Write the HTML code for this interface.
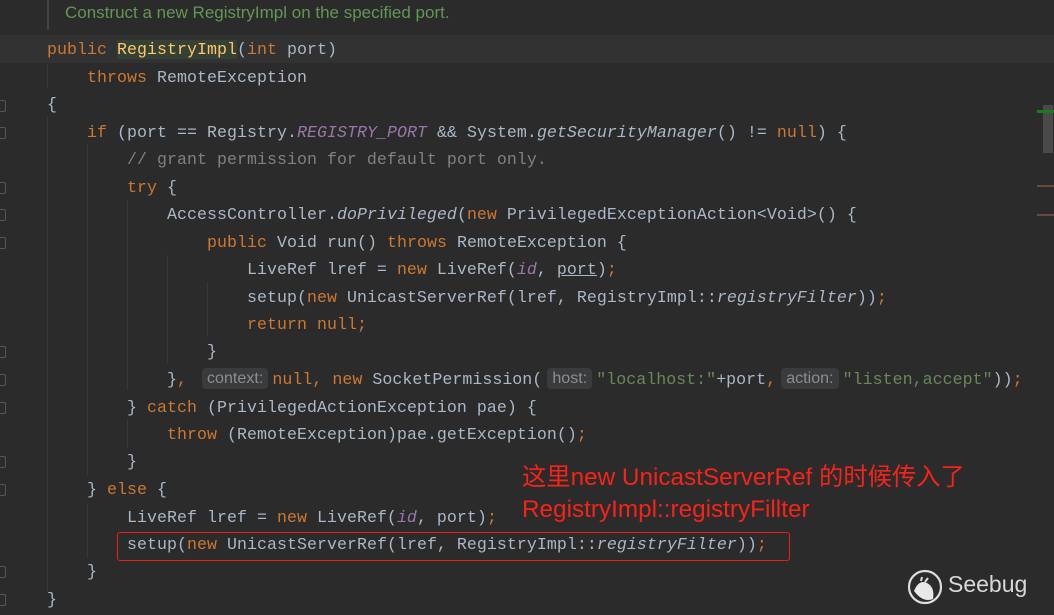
<!DOCTYPE html>
<html><head><meta charset="utf-8"><style>
body{margin:0;width:1054px;height:615px;background:#2b2b2b;overflow:hidden;position:relative;font-family:"Liberation Mono",monospace;}
.l{position:absolute;left:47px;height:27.5px;line-height:27.5px;font-size:16.6px;color:#a9b7c6;white-space:pre;letter-spacing:0.04px}
.k{color:#cc7832}.p{color:#9876aa;font-style:italic}.s{color:#6a8759}.c{color:#808080}.i{font-style:italic}
.h{display:inline-block;background:#3a3b3c;color:#8b8e90;font-family:"Liberation Sans",sans-serif;font-size:16px;line-height:21px;padding:0 5px;border-radius:4px;margin:0 4px 0 5px;vertical-align:1px}
.g{position:absolute;width:1px;background:#393939}
.f{position:absolute;left:0;width:5px;height:10px;border:1px solid #555;border-left:none;border-radius:0 2px 2px 0}
</style></head><body>
<div style="position:absolute;left:47px;top:0;width:2px;height:30px;background:#3c4a3c"></div>
<div style="position:absolute;left:65px;top:3px;font-family:'Liberation Sans',sans-serif;font-size:17px;color:#629755">Construct a new RegistryImpl on the specified port.</div>
<div style="position:absolute;left:0;top:35px;width:1054px;height:28px;background:#323232"></div>
<div class="g" style="left:47px;top:63px;height:25px"></div>
<div class="g" style="left:47px;top:117px;height:474px"></div>
<div class="g" style="left:87px;top:145px;height:330px"></div>
<div class="g" style="left:87px;top:503px;height:55px"></div>
<div class="g" style="left:127px;top:200px;height:190px"></div>
<div class="g" style="left:127px;top:420px;height:28px"></div>
<div class="g" style="left:167px;top:255px;height:108px"></div>
<div class="g" style="left:207px;top:282px;height:55px"></div>
<div class="f" style="top:100px"></div><div class="f" style="top:127px"></div><div class="f" style="top:182px"></div><div class="f" style="top:209px"></div><div class="f" style="top:237px"></div><div class="f" style="top:346px"></div><div class="f" style="top:374px"></div><div class="f" style="top:402px"></div><div class="f" style="top:456px"></div><div class="f" style="top:484px"></div><div class="f" style="top:566px"></div><div class="f" style="top:594px"></div>
<div class="l" style="top:36px"><span class="k">public </span><span style="color:#ffc66d;background:#344134">RegistryImpl</span>(<span class="k">int</span> port)</div>
<div class="l" style="top:64px">    <span class="k">throws</span> RemoteException</div>
<div class="l" style="top:91px">{</div>
<div class="l" style="top:119px">    <span class="k">if</span> (port == Registry.<span class="p">REGISTRY_PORT</span> &amp;&amp; System.<span class="i">getSecurityManager</span>() != <span class="k">null</span>) {</div>
<div class="l" style="top:146px">        <span class="c">// grant permission for default port only.</span></div>
<div class="l" style="top:174px">        <span class="k">try</span> {</div>
<div class="l" style="top:201px">            AccessController.<span class="i">doPrivileged</span>(<span class="k">new</span> PrivilegedExceptionAction&lt;Void&gt;() {</div>
<div class="l" style="top:229px">                <span class="k">public</span> Void run() <span class="k">throws</span> RemoteException {</div>
<div class="l" style="top:256px">                    LiveRef lref = <span class="k">new</span> LiveRef(<span class="p">id</span>, <span style="text-decoration:underline">port</span>)<span class="k">;</span></div>
<div class="l" style="top:284px">                    setup(<span class="k">new</span> UnicastServerRef(lref, RegistryImpl::<span class="i">registryFilter</span>))<span class="k">;</span></div>
<div class="l" style="top:311px">                    <span class="k">return null;</span></div>
<div class="l" style="top:338px">                }</div>
<div class="l" style="top:366px">            }<span class="k">,</span> <span class="h">context:</span><span class="k">null,</span> <span class="k">new</span> SocketPermission(<span class="h">host:</span><span class="s">"localhost:"</span>+port<span class="k">,</span><span class="h">action:</span><span class="s">"listen,accept"</span>))<span class="k">;</span></div>
<div class="l" style="top:394px">        } <span class="k">catch</span> (PrivilegedActionException pae) {</div>
<div class="l" style="top:421px">            <span class="k">throw</span> (RemoteException)pae.getException()<span class="k">;</span></div>
<div class="l" style="top:448px">        }</div>
<div class="l" style="top:476px">    } <span class="k">else</span> {</div>
<div class="l" style="top:504px">        LiveRef lref = <span class="k">new</span> LiveRef(<span class="p">id</span>, port)<span class="k">;</span></div>
<div class="l" style="top:531px">        setup(<span class="k">new</span> UnicastServerRef(lref, RegistryImpl::<span class="i">registryFilter</span>))<span class="k">;</span></div>
<div class="l" style="top:558px">    }</div>
<div class="l" style="top:586px">}</div>
<div style="position:absolute;left:117px;top:532px;width:671px;height:27px;border:1px solid #e8201c;border-radius:3px"></div>
<div style="position:absolute;left:522px;top:462px;font-family:'Liberation Sans','Noto Sans CJK SC',sans-serif;font-size:24.3px;line-height:32px;color:#f5231a">这里new UnicastServerRef 的时候传入了<br>RegistryImpl::registryFillter</div>
<div style="position:absolute;left:1043px;top:105px;width:10px;height:48px;background:#4a4a4a"></div>
<div style="position:absolute;left:1037px;top:110px;width:17px;height:3px;background:#1f7a1f"></div>
<div style="position:absolute;left:1037px;top:185px;width:17px;height:2px;background:#6b4a3a"></div>
<div style="position:absolute;left:1037px;top:214px;width:17px;height:2px;background:#6b4a3a"></div>
<svg style="position:absolute;left:905px;top:567px" width="40" height="40" viewBox="0 0 40 40"><circle cx="20" cy="20" r="16" fill="none" stroke="#ddd" stroke-width="2.2"/><path d="M9 24 Q14 12 22 16 Q30 20 28 32 Q18 36 9 24Z" fill="#e8e8e8"/><path d="M16 14 L17 10 M20 15 L23 11" stroke="#ddd" stroke-width="2"/></svg>
<div style="position:absolute;left:948px;top:571px;font-family:'Liberation Sans',sans-serif;font-size:23px;color:#d8d8d8">Seebug</div>
</body></html>
